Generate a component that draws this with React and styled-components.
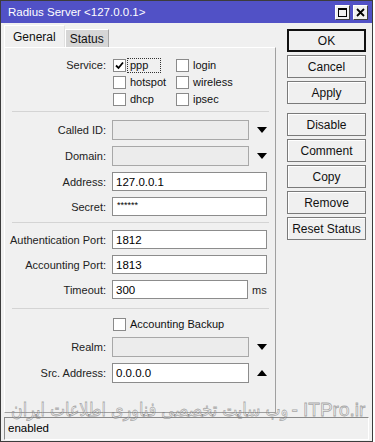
import React from "react";
import styled, { createGlobalStyle } from "styled-components";

const Global = createGlobalStyle`
  html, body {
    margin: 0;
    padding: 0;
    background: #ffffff;
  }
  body {
    font-family: "Liberation Sans", Arial, sans-serif;
    font-size: 11px;
    color: #000;
  }
`;

const Window = styled.div`
  position: relative;
  width: 371px;
  height: 440px;
  border: 1px solid #3c3c3c;
  background: #f0f0f0;
  display: flex;
  flex-direction: column;
  overflow: hidden;
`;

/* title bar */
const TitleBar = styled.div`
  height: 22px;
  background: #5151c6;
  display: flex;
  align-items: center;
  padding: 0 4px 0 7px;
  color: #fff;
  font-size: 11.5px;
`;

const Title = styled.span`
  flex: 1;
`;

const WinBtn = styled.div`
  width: 13px;
  height: 13px;
  margin-left: 3px;
  background: #f0f0f0;
  border: 1px solid #fff;
  border-right-color: #404040;
  border-bottom-color: #404040;
  display: flex;
  align-items: center;
  justify-content: center;
`;

/* body */
const Body = styled.div`
  flex: 1;
  display: flex;
  padding: 2px 0 0 3px;
`;

const LeftCol = styled.div`
  width: 272px;
  display: flex;
  flex-direction: column;
`;

const Tabs = styled.div`
  display: flex;
  align-items: flex-end;
  height: 22px;
`;

const Tab = styled.div`
  height: ${(p) => (p.$active ? "22px" : "18px")};
  padding: 0 ${(p) => (p.$active ? "8px" : "4px")};
  display: flex;
  align-items: center;
  background: ${(p) => (p.$active ? "#f0f0f0" : "#d6d6d6")};
  border: 1px solid #fff;
  border-bottom: none;
  border-right-color: ${(p) => (p.$active ? "#e0e0e0" : "#a6a6a6")};
  font-size: 12px;
  color: #111;
  box-sizing: border-box;
`;

const Panel = styled.div`
  height: 366px;
  box-sizing: border-box;
  border: 1px solid #fff;
  border-right-color: #a0a0a0;
  border-bottom-color: #a0a0a0;
  display: flex;
  flex-direction: column;
`;

const Divider = styled.div`
  height: 1px;
  background: #d4d4d4;
  margin: ${(p) => p.$top}px 6px 0 7px;
`;

const Section = styled.div`
  display: flex;
  flex-direction: column;
  gap: 6px;
  margin-top: ${(p) => p.$top}px;
`;

const Row = styled.div`
  display: grid;
  grid-template-columns: 101px auto;
  column-gap: 6px;
  align-items: ${(p) => (p.$top ? "start" : "center")};
  height: ${(p) => p.$h}px;
  line-height: ${(p) => (p.$top ? "17px" : "normal")};
`;

const Label = styled.span`
  text-align: right;
  color: #222;
`;

const FieldWrap = styled.div`
  display: flex;
  align-items: center;
`;

const Input = styled.div`
  width: ${(p) => p.$w}px;
  height: ${(p) => p.$h}px;
  box-sizing: border-box;
  border: 1px solid ${(p) => (p.$disabled ? "#a8a8a8" : "#8c8c8c")};
  background: ${(p) => (p.$disabled ? "#ececec" : "#ffffff")};
  display: flex;
  align-items: ${(p) => (p.$small ? "flex-start" : "center")};
  padding: ${(p) => (p.$small ? "2px 0 0 4px" : "0 0 0 3px")};
  font-size: ${(p) => (p.$small ? "9px" : "11.5px")};
`;

const Unit = styled.span`
  margin-left: 4px;
  color: #222;
`;

const ArrowBtn = styled.div`
  width: 18px;
  display: flex;
  justify-content: flex-end;
`;

/* checkboxes */
const CheckGrid = styled.div`
  display: grid;
  grid-template-columns: 63px auto;
  grid-auto-rows: 17px;
  align-items: center;
`;

const CheckItem = styled.label`
  display: flex;
  align-items: center;
  color: #111;
`;

const Box = styled.span`
  width: 13px;
  height: 13px;
  box-sizing: border-box;
  border: 1px solid #8a8a8a;
  background: #fff;
  margin: 0 4px 0 1px;
  display: flex;
  align-items: center;
  justify-content: center;
`;

const Focus = styled.span`
  outline: 1px dotted #333;
  outline-offset: 0;
  padding: 0 12px 0 2px;
  margin-left: -2px;
  line-height: 13px;
`;

/* buttons */
const RightCol = styled.div`
  margin-left: 11px;
  padding-top: 4px;
  display: flex;
  flex-direction: column;
  gap: 3px;
`;

const Button = styled.div`
  width: 79px;
  height: 23px;
  box-sizing: border-box;
  border: ${(p) => (p.$def ? "2px solid #111" : "1px solid #7a7a7a")};
  box-shadow: ${(p) => (p.$def ? "none" : "inset 1px 1px 0 #fff")};
  background: #f0f0f0;
  display: flex;
  align-items: center;
  justify-content: center;
  font-size: 12px;
  color: #111;
  margin-top: ${(p) => (p.$gap ? "6px" : "0")};
`;

/* status bar */
const StatusBar = styled.div`
  height: 23px;
  margin: 2px 3px 1px 3px;
  box-sizing: border-box;
  border: 1px solid #8a8a8a;
  border-right-color: #fff;
  border-bottom-color: #fff;
  display: flex;
  align-items: center;
  padding: 0 0 2px 3px;
  font-size: 11.5px;
`;

const Watermark = styled.div`
  position: absolute;
  left: 10px;
  top: 397px;
  white-space: nowrap;
  direction: ltr;
  color: rgba(255, 255, 255, 0.3);
  -webkit-text-stroke: 0.8px rgba(90, 90, 90, 0.5);
  pointer-events: none;
  display: flex;
  align-items: baseline;
`;

const WmFa = styled.span`
  display: inline-block;
  font-family: "DejaVu Sans", sans-serif;
  font-size: 19px;
  transform: scaleX(0.84);
  transform-origin: left center;
  margin-right: -55px;
`;

const WmEn = styled.span`
  font-family: "Liberation Sans", Arial, sans-serif;
  font-size: 19px;
`;

const Tri = ({ up }) => (
  <svg width="10" height="6" viewBox="0 0 10 6">
    <path d={up ? "M0 6 L5 0 L10 6 Z" : "M0 0 L10 0 L5 6 Z"} fill="#000" />
  </svg>
);

const Check = ({ on }) => (
  <Box>
    {on && (
      <svg width="9" height="9" viewBox="0 0 9 9">
        <path d="M1 4.5 L3.5 7 L8 1.5" stroke="#000" strokeWidth="1.8" fill="none" />
      </svg>
    )}
  </Box>
);

const Field = ({ label, value, w, h, disabled, arrow, unit, small }) => (
  <Row $h={h}>
    <Label>{label}</Label>
    <FieldWrap>
      <Input $w={w} $h={h} $disabled={disabled} $small={small}>
        {value}
      </Input>
      {arrow && (
        <ArrowBtn>
          <Tri up={arrow === "up"} />
        </ArrowBtn>
      )}
      {unit && <Unit>{unit}</Unit>}
    </FieldWrap>
  </Row>
);

const buttons = ["OK", "Cancel", "Apply", "Disable", "Comment", "Copy", "Remove", "Reset Status"];

const App = () => {
  return (
    <>
      <Global />
      <Window>
        <TitleBar>
          <Title>Radius Server &lt;127.0.0.1&gt;</Title>
          <WinBtn>
            <svg width="9" height="9" viewBox="0 0 9 9">
              <rect x="0.5" y="0.5" width="8" height="8" fill="none" stroke="#000" />
              <line x1="0" y1="1.5" x2="9" y2="1.5" stroke="#000" />
            </svg>
          </WinBtn>
          <WinBtn>
            <svg width="9" height="9" viewBox="0 0 9 9">
              <path d="M1 1 L8 8 M8 1 L1 8" stroke="#000" strokeWidth="1.8" />
            </svg>
          </WinBtn>
        </TitleBar>

        <Body>
          <LeftCol>
            <Tabs>
              <Tab $active>General</Tab>
              <Tab>Status</Tab>
            </Tabs>
            <Panel>
              <Section $top={9}>
                <Row $h={17} $top>
                  <Label>Service:</Label>
                  <CheckGrid>
                    <CheckItem>
                      <Check on />
                      <Focus>ppp</Focus>
                    </CheckItem>
                    <CheckItem>
                      <Check />
                      login
                    </CheckItem>
                    <CheckItem>
                      <Check />
                      hotspot
                    </CheckItem>
                    <CheckItem>
                      <Check />
                      wireless
                    </CheckItem>
                    <CheckItem>
                      <Check />
                      dhcp
                    </CheckItem>
                    <CheckItem>
                      <Check />
                      ipsec
                    </CheckItem>
                  </CheckGrid>
                </Row>
              </Section>

              <Divider $top={37} />

              <Section $top={8}>
                <Field label="Called ID:" w={137} h={20} disabled arrow="down" />
                <Field label="Domain:" w={137} h={20} disabled arrow="down" />
                <Field label="Address:" value="127.0.0.1" w={155} h={19} />
                <Field label="Secret:" value="******" w={155} h={19} small />
              </Section>

              <Divider $top={6} />

              <Section $top={7}>
                <Field label="Authentication Port:" value="1812" w={155} h={19} />
                <Field label="Accounting Port:" value="1813" w={155} h={19} />
                <Field label="Timeout:" value="300" w={136} h={19} unit="ms" />
              </Section>

              <Divider $top={9} />

              <Section $top={8}>
                <Row $h={14}>
                  <span />
                  <CheckItem>
                    <Check />
                    Accounting Backup
                  </CheckItem>
                </Row>
                <Field label="Realm:" w={137} h={20} disabled arrow="down" />
                <Field label="Src. Address:" value="0.0.0.0" w={137} h={20} arrow="up" />
              </Section>
            </Panel>
          </LeftCol>

          <RightCol>
            {buttons.map((b, i) => (
              <Button key={b} $def={i === 0} $gap={i === 3}>
                {b}
              </Button>
            ))}
          </RightCol>
        </Body>

        <StatusBar>enabled</StatusBar>
        <Watermark>
          <WmFa dir="rtl">وب سایت تخصصی فناوری اطلاعات ایران</WmFa>
          <WmEn>&nbsp;- ITPro.ir</WmEn>
        </Watermark>
      </Window>
    </>
  );
};

export default App;
